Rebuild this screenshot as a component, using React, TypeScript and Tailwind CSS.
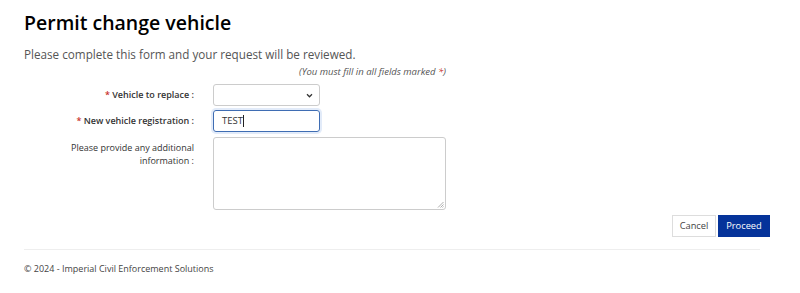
import React from 'react';

export default function App() {
  return (
    <div className="min-h-[293px] bg-white font-['Open_Sans',sans-serif] text-[#212529]">
      <div className="px-6 pt-[9px]">
        {/* Heading */}
        <h1 className="text-[19.5px] leading-[28px] font-semibold text-black">Permit change vehicle</h1>
        <p className="mt-[8px] text-[11.7px] leading-[18px] text-[#555]">
          Please complete this form and your request will be reviewed.
        </p>

        {/* Form */}
        <div className="w-[422px] mt-[2px]">
          <p className="text-right text-[9.5px] leading-[14px] italic text-[#555]">
            (You must fill in all fields marked <span className="text-[#c9302c]">*</span>)
          </p>

          <div className="mt-[5px] flex items-center">
            <label className="w-[170px] text-right text-[9px] font-semibold text-[#333]">
              <span className="text-[#c9302c]">*</span> Vehicle to replace :
            </label>
            <div className="ml-[19px] w-[107px] h-[22px] border border-[#ccc] rounded-[3px] flex items-center justify-end pr-[6px]">
              <svg width="7" height="5" viewBox="0 0 8 6" fill="none" stroke="#333" strokeWidth="1.5">
                <path d="M1 1.5l3 3 3-3" />
              </svg>
            </div>
          </div>

          <div className="mt-[4px] flex items-center">
            <label className="w-[170px] text-right text-[9px] font-semibold text-[#333]">
              <span className="text-[#c9302c]">*</span> New vehicle registration :
            </label>
            <div className="ml-[19px] w-[107px] h-[22px] border border-[#3f6db3] rounded-[3px] shadow-[0_0_0_2px_rgba(140,175,230,0.25)] flex items-center pl-[8px] text-[9.5px] text-[#333]">
              TEST<span className="inline-block w-px h-[12px] bg-[#222]" />
            </div>
          </div>

          <div className="mt-[5px] flex items-start">
            <label className="w-[170px] text-right text-[9px] leading-[13px] text-[#333] pt-[4px]">
              Please provide any additional
              <br />
              information :
            </label>
            <div className="ml-[19px] relative w-[233px] h-[73px] border border-[#ccc] rounded-[3px]">
              <svg className="absolute right-[1px] bottom-[1px]" width="7" height="7" viewBox="0 0 7 7" stroke="#999" strokeWidth="0.8">
                <path d="M6.5 1L1 6.5M6.5 3.5L3.5 6.5M6.5 5.5L5.5 6.5" />
              </svg>
            </div>
          </div>
        </div>

        {/* Actions */}
        <div className="mt-[5px] mr-[6px] flex justify-end gap-[2px]">
          <button className="h-[22px] w-[44px] border border-[#ddd] bg-white text-[9.3px] text-[#444]">Cancel</button>
          <button className="h-[22px] w-[52px] bg-[#05339a] text-[9.3px] text-white">Proceed</button>
        </div>

        <hr className="mt-[12px] mr-[16px] border-0 border-t border-[#eee]" />

        <footer className="mt-[12px] text-[9px] leading-[14px] text-[#444]">
          © 2024 - Imperial Civil Enforcement Solutions
        </footer>
      </div>
    </div>
  );
}
